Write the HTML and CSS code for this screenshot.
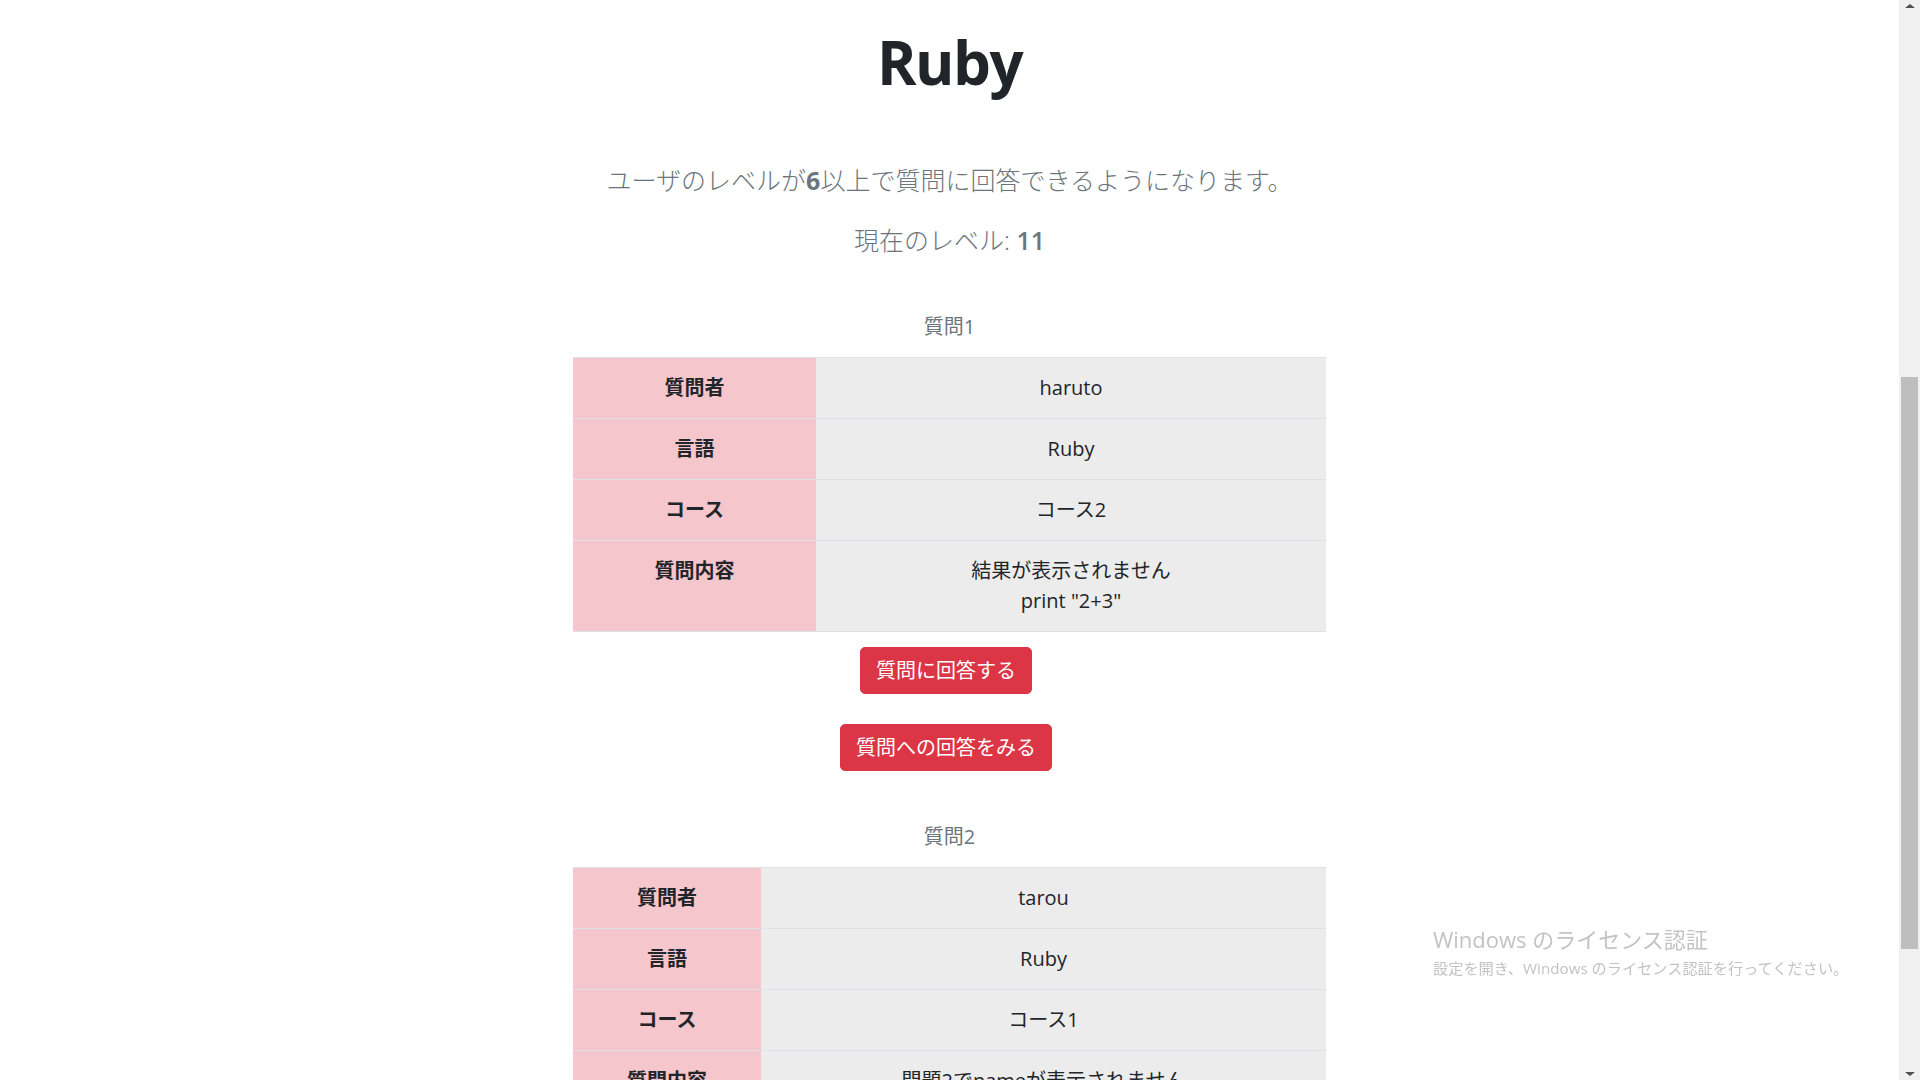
FILE: index.html
```html
<!DOCTYPE html>
<html lang="ja">
<head>
<meta charset="utf-8">
<title>Ruby</title>
<link rel="stylesheet" href="styles.css">
</head>
<body>
<div class="page">
  <main class="content">
    <div class="container">
      <h1 class="title">Ruby</h1>
      <p class="lead">ユーザのレベルが<strong>6</strong>以上で質問に回答できるようになります。</p>
      <p class="lead level">現在のレベル: <strong>11</strong></p>

      <section class="question">
        <table class="qtable">
          <caption>質問1</caption>
          <tbody>
            <tr><th class="head-wide">質問者</th><td>haruto</td></tr>
            <tr><th>言語</th><td>Ruby</td></tr>
            <tr><th>コース</th><td>コース2</td></tr>
            <tr><th>質問内容</th><td>結果が表示されません<br>print "2+3"</td></tr>
          </tbody>
        </table>
        <div class="actions">
          <button class="btn" type="button">質問に回答する</button>
          <button class="btn" type="button">質問への回答をみる</button>
        </div>
      </section>

      <section class="question">
        <table class="qtable">
          <caption>質問2</caption>
          <tbody>
            <tr><th class="head-narrow">質問者</th><td>tarou</td></tr>
            <tr><th>言語</th><td>Ruby</td></tr>
            <tr><th>コース</th><td>コース1</td></tr>
            <tr><th>質問内容</th><td>問題2でnameが表示されません</td></tr>
          </tbody>
        </table>
      </section>
    </div>
  </main>
  <aside class="scrollbar">
    <span class="arrow arrow-up"></span>
    <div class="thumb"></div>
    <div class="track-rest"></div>
    <span class="arrow arrow-down"></span>
  </aside>
</div>
<div class="watermark">
  <div class="wm-title">Windows のライセンス認証</div>
  <div class="wm-sub">設定を開き、Windows のライセンス認証を行ってください。</div>
</div>
</body>
</html>
```
FILE: styles.css
```css
* { box-sizing: border-box; }

html, body {
  margin: 0;
  padding: 0;
  height: 100%;
  overflow: hidden;
  background: #fff;
}

body {
  font-family: "Open Sans", "Noto Sans CJK JP", sans-serif;
  font-size: 20px;
  line-height: 1.5;
  color: #212529;
}

.page {
  display: flex;
  height: 1080px;
}

.content {
  flex: 1;
  min-width: 0;
  overflow: hidden;
}

.container {
  width: 753px;
  margin: 0 auto;
}

.title {
  margin: 26px 0 0;
  font-size: 60px;
  line-height: 72px;
  font-weight: 700;
  letter-spacing: -1.5px;
  text-align: center;
  color: #212529;
}

.lead {
  margin: 64px 0 22px;
  font-size: 25px;
  line-height: 37.5px;
  font-weight: 300;
  text-align: center;
  color: #6c757d;
  white-space: nowrap;
}

.lead strong { font-weight: 700; }

.level {
  margin: 0 0 38px;
}

.level strong { font-weight: 600; }

.qtable {
  width: 100%;
  border-collapse: collapse;
  border-bottom: 1px solid #dee2e6;
  table-layout: fixed;
}

.qtable caption {
  caption-side: top;
  padding: 15px 0;
  text-align: center;
  color: #6c757d;
  font-size: 20px;
  line-height: 30px;
}

.qtable th,
.qtable td {
  padding: 15px;
  border-top: 1px solid #dee2e6;
  line-height: 30px;
  vertical-align: top;
  text-align: center;
}

.qtable th {
  background: #f5c6cb;
  font-weight: 700;
}

.qtable td {
  background: #ececec;
  font-weight: 400;
}

.head-wide { width: 243px; }
.head-narrow { width: 188px; }

.actions {
  display: flex;
  flex-direction: column;
  align-items: center;
  gap: 30px;
  margin: 15px 0 36px;
  padding-right: 7px;
}

.btn {
  display: inline-block;
  padding: 7.5px 15px;
  font-family: inherit;
  font-size: 20px;
  line-height: 30px;
  font-weight: 400;
  color: #fff;
  background: #dc3545;
  border: 1px solid #dc3545;
  border-radius: 5px;
}

.scrollbar {
  width: 21px;
  flex: 0 0 21px;
  background: #f0f0f0;
  display: flex;
  flex-direction: column;
  align-items: center;
}

.arrow {
  display: block;
  width: 0;
  height: 0;
  border-left: 5px solid transparent;
  border-right: 5px solid transparent;
}

.arrow-up {
  margin: 4px 0 0;
  border-bottom: 4px solid #505050;
}

.arrow-down {
  margin: 0 0 4px;
  border-top: 4px solid #505050;
}

.thumb {
  width: 17px;
  height: 572px;
  margin-top: 369px;
  background: #bebebe;
}

.track-rest { flex: 1; }

.watermark {
  position: fixed;
  left: 1433px;
  top: 924px;
  color: #c3c3c3;
  white-space: nowrap;
  pointer-events: none;
}

.wm-title {
  font-size: 22px;
  line-height: 30px;
}

.wm-sub {
  font-size: 15.2px;
  line-height: 29px;
}
```
